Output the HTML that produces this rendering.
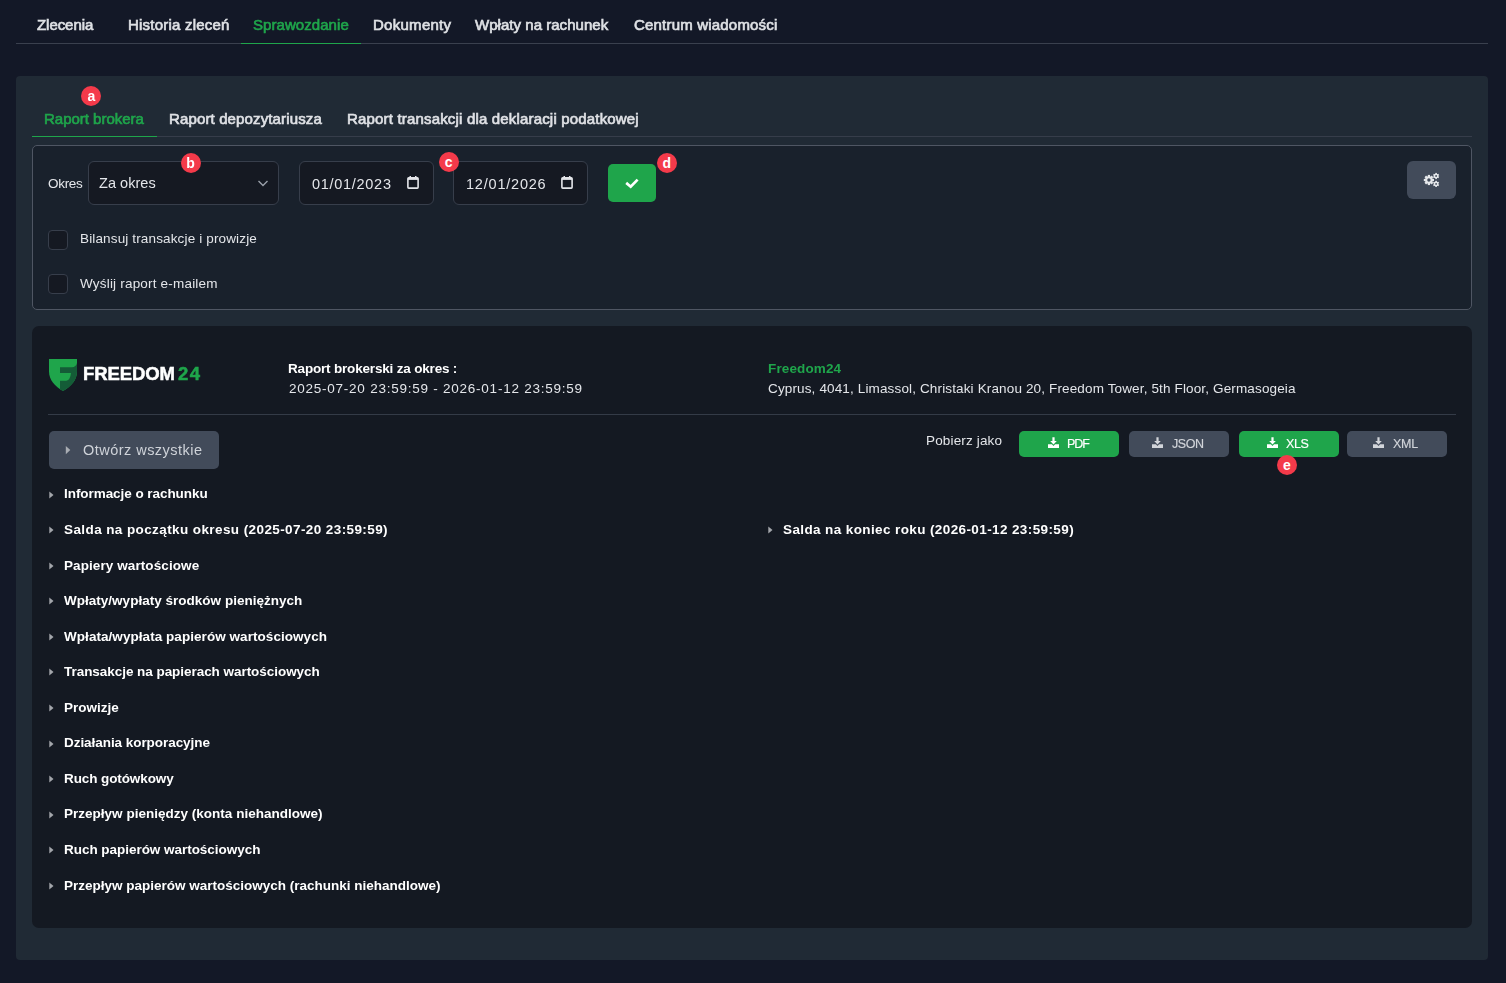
<!DOCTYPE html>
<html lang="pl"><head><meta charset="utf-8"><title>Sprawozdanie</title>
<style>
html,body{margin:0;padding:0;}
body{width:1506px;height:983px;background:#131827;position:relative;overflow:hidden;font-family:"Liberation Sans",sans-serif;}
.t{position:absolute;line-height:1;white-space:nowrap;will-change:transform;}
.r{position:absolute;}
.badge{position:absolute;width:20px;height:20px;border-radius:50%;background:#f43a4a;color:#fff;font:700 14px/20px "Liberation Sans",sans-serif;text-align:center;}
</style></head><body>
<div class="t" style="left:37.1px;top:17.40px;font-size:15px;font-weight:400;color:#dfe1e5;letter-spacing:-0.057px;-webkit-text-stroke:0.65px #dfe1e5;">Zlecenia</div>
<div class="t" style="left:127.7px;top:17.40px;font-size:15px;font-weight:400;color:#dfe1e5;letter-spacing:0.221px;-webkit-text-stroke:0.65px #dfe1e5;">Historia zleceń</div>
<div class="t" style="left:252.8px;top:17.40px;font-size:15px;font-weight:400;color:#1fa54b;letter-spacing:0.064px;-webkit-text-stroke:0.65px #1fa54b;">Sprawozdanie</div>
<div class="t" style="left:372.8px;top:17.40px;font-size:15px;font-weight:400;color:#dfe1e5;letter-spacing:0.275px;-webkit-text-stroke:0.65px #dfe1e5;">Dokumenty</div>
<div class="t" style="left:475.1px;top:17.40px;font-size:15px;font-weight:400;color:#dfe1e5;letter-spacing:0.035px;-webkit-text-stroke:0.65px #dfe1e5;">Wpłaty na rachunek</div>
<div class="t" style="left:633.6px;top:17.40px;font-size:15px;font-weight:400;color:#dfe1e5;letter-spacing:0.194px;-webkit-text-stroke:0.65px #dfe1e5;">Centrum wiadomości</div>
<div class="r" style="left:16px;top:43px;width:1472px;height:1px;background:#3a404e;border-radius:0px;"></div>
<div class="r" style="left:241px;top:43px;width:120px;height:1px;background:#1fa54b;border-radius:0px;"></div>
<div class="r" style="left:16px;top:76px;width:1472px;height:884px;background:#202a35;border-radius:4px;"></div>
<div class="t" style="left:43.7px;top:110.50px;font-size:15px;font-weight:400;color:#1fa54b;letter-spacing:-0.015px;-webkit-text-stroke:0.65px #1fa54b;">Raport brokera</div>
<div class="t" style="left:169.3px;top:110.50px;font-size:15px;font-weight:400;color:#dfe1e5;letter-spacing:0.135px;-webkit-text-stroke:0.65px #dfe1e5;">Raport depozytariusza</div>
<div class="t" style="left:346.8px;top:110.50px;font-size:15px;font-weight:400;color:#dfe1e5;letter-spacing:0.176px;-webkit-text-stroke:0.65px #dfe1e5;">Raport transakcji dla deklaracji podatkowej</div>
<div class="r" style="left:32px;top:136px;width:1440px;height:1px;background:#363d4a;border-radius:0px;"></div>
<div class="r" style="left:32px;top:136px;width:125px;height:1px;background:#1fa54b;border-radius:0px;"></div>
<div class="badge" style="left:81.3px;top:86.0px;">a</div>
<div class="r" style="left:32px;top:145px;width:1440px;height:165px;background:#19212c;border-radius:5px;border:1px solid #4f5663;box-sizing:border-box;"></div>
<div class="t" style="left:48.0px;top:176.97px;font-size:13.5px;font-weight:400;color:#e4e6ea;letter-spacing:-0.300px;">Okres</div>
<div class="r" style="left:88px;top:161px;width:191px;height:44px;background:#151922;border-radius:6px;border:1px solid #373e4b;box-sizing:border-box;"></div>
<div class="t" style="left:99.0px;top:176.13px;font-size:14.5px;font-weight:400;color:#e4e6ea;letter-spacing:0.040px;">Za okres</div>
<svg class="r" style="left:256.6px;top:179px" width="12" height="9" viewBox="0 0 12 9"><path d="M1.5 2 L6 6.5 L10.5 2" fill="none" stroke="#9aa0aa" stroke-width="1.4"/></svg>
<div class="badge" style="left:180.5px;top:152.9px;">b</div>
<div class="r" style="left:299px;top:161px;width:135px;height:44px;background:#151922;border-radius:6px;border:1px solid #373e4b;box-sizing:border-box;"></div>
<div class="t" style="left:311.5px;top:176.53px;font-size:14.5px;font-weight:400;color:#e4e6ea;letter-spacing:0.710px;">01/01/2023</div>
<svg class="r" style="left:407px;top:176px" width="12" height="13" viewBox="0 0 12 13"><rect x="0.9" y="1.9" width="10.2" height="10.2" rx="0.8" fill="none" stroke="#e4e6ea" stroke-width="1.6"/><rect x="0.9" y="1.9" width="10.2" height="2" fill="#e4e6ea"/><rect x="2.5" y="0" width="1.5" height="2" fill="#e4e6ea"/><rect x="8" y="0" width="1.5" height="2" fill="#e4e6ea"/></svg>
<div class="r" style="left:453px;top:161px;width:135px;height:44px;background:#151922;border-radius:6px;border:1px solid #373e4b;box-sizing:border-box;"></div>
<div class="t" style="left:465.5px;top:176.53px;font-size:14.5px;font-weight:400;color:#e4e6ea;letter-spacing:0.790px;">12/01/2026</div>
<svg class="r" style="left:561px;top:176px" width="12" height="13" viewBox="0 0 12 13"><rect x="0.9" y="1.9" width="10.2" height="10.2" rx="0.8" fill="none" stroke="#e4e6ea" stroke-width="1.6"/><rect x="0.9" y="1.9" width="10.2" height="2" fill="#e4e6ea"/><rect x="2.5" y="0" width="1.5" height="2" fill="#e4e6ea"/><rect x="8" y="0" width="1.5" height="2" fill="#e4e6ea"/></svg>
<div class="badge" style="left:438.7px;top:151.5px;">c</div>
<div class="r" style="left:608px;top:164px;width:48px;height:38px;background:#1fa54b;border-radius:5px;"></div>
<svg class="r" style="left:624px;top:177px" width="16" height="12" viewBox="0 0 16 12"><path d="M2.2 5.9 L6.7 9.7 L13.6 2.6" fill="none" stroke="#fff" stroke-width="2.7"/></svg>
<div class="badge" style="left:656.8px;top:152.8px;">d</div>
<div class="r" style="left:1407px;top:161px;width:49px;height:38px;background:#424b5a;border-radius:6px;"></div>
<svg class="r" style="left:1420px;top:170px" width="22" height="20" viewBox="0 0 22 20">
<g fill="#e6e8eb">
<circle cx="8.9" cy="10" r="3.8"/>
<g transform="translate(8.9 10)"><rect x="-1.1" y="-5.1" width="2.2" height="10.2"/><rect x="-1.1" y="-5.1" width="2.2" height="10.2" transform="rotate(45)"/><rect x="-1.1" y="-5.1" width="2.2" height="10.2" transform="rotate(90)"/><rect x="-1.1" y="-5.1" width="2.2" height="10.2" transform="rotate(135)"/></g>
<g transform="translate(16.1 6)"><circle r="2.3"/><rect x="-0.8" y="-3.1" width="1.6" height="6.2"/><rect x="-0.8" y="-3.1" width="1.6" height="6.2" transform="rotate(60)"/><rect x="-0.8" y="-3.1" width="1.6" height="6.2" transform="rotate(120)"/></g>
<g transform="translate(16.1 13.9)"><circle r="2.3"/><rect x="-0.8" y="-3.1" width="1.6" height="6.2"/><rect x="-0.8" y="-3.1" width="1.6" height="6.2" transform="rotate(60)"/><rect x="-0.8" y="-3.1" width="1.6" height="6.2" transform="rotate(120)"/></g>
</g>
<g fill="#424b5a"><circle cx="8.9" cy="10" r="1.7"/><circle cx="16.1" cy="6" r="0.9"/><circle cx="16.1" cy="13.9" r="0.9"/></g>
</svg>
<div class="r" style="left:48px;top:230px;width:20px;height:20px;background:#151922;border-radius:4px;border:1px solid #373e4b;box-sizing:border-box;"></div>
<div class="t" style="left:79.5px;top:231.77px;font-size:13.5px;font-weight:400;color:#e4e6ea;letter-spacing:0.145px;">Bilansuj transakcje i prowizje</div>
<div class="r" style="left:48px;top:274px;width:20px;height:20px;background:#151922;border-radius:4px;border:1px solid #373e4b;box-sizing:border-box;"></div>
<div class="t" style="left:79.5px;top:276.57px;font-size:13.5px;font-weight:400;color:#e4e6ea;letter-spacing:0.195px;">Wyślij raport e-mailem</div>
<div class="r" style="left:32px;top:326px;width:1440px;height:602px;background:#141922;border-radius:7px;"></div>
<svg class="r" style="left:48.9px;top:358.9px" width="28" height="32" viewBox="0 0 28 32">
<defs><clipPath id="sh"><path d="M0 0 H28 V12.5 C28 21 22 27.5 14 32 C6 27.5 0 21 0 12.5 Z"/></clipPath></defs>
<g clip-path="url(#sh)">
<rect width="28" height="32" fill="#1fa54b"/>
<path d="M11 8.2 H23 C25.5 8.2 27.5 6.5 28 4 V32 H11 Z" fill="#145c37"/>
<path d="M11 14.1 H22 C21.5 18.5 20 21.8 17 21.8 H11 Z" fill="#1fa54b"/>
</g></svg>
<div class="t" style="left:82.7px;top:364.94px;font-size:18.5px;font-weight:700;color:#ffffff;letter-spacing:-0.100px;-webkit-text-stroke:0.5px #fff;">FREEDOM</div>
<div class="t" style="left:178.3px;top:364.94px;font-size:18.5px;font-weight:700;color:#1fa54b;letter-spacing:1.500px;-webkit-text-stroke:0.5px #1fa54b;">24</div>
<div class="t" style="left:288.4px;top:361.97px;font-size:13.5px;font-weight:700;color:#ffffff;letter-spacing:-0.181px;">Raport brokerski za okres :</div>
<div class="t" style="left:289.1px;top:381.87px;font-size:13.5px;font-weight:400;color:#e4e6ea;letter-spacing:0.758px;">2025-07-20 23:59:59 - 2026-01-12 23:59:59</div>
<div class="t" style="left:768.1px;top:361.57px;font-size:13.5px;font-weight:700;color:#1fa54b;letter-spacing:0.137px;">Freedom24</div>
<div class="t" style="left:768.1px;top:381.97px;font-size:13.5px;font-weight:400;color:#e4e6ea;letter-spacing:0.142px;">Cyprus, 4041, Limassol, Christaki Kranou 20, Freedom Tower, 5th Floor, Germasogeia</div>
<div class="r" style="left:48px;top:414px;width:1408px;height:1px;background:#343b47;border-radius:0px;"></div>
<div class="r" style="left:49px;top:431px;width:170px;height:38px;background:#424b5a;border-radius:5px;"></div>
<svg class="r" style="left:65px;top:445px" width="6" height="10" viewBox="0 0 6 10"><path d="M0.8 1 L5.3 5.1 L0.8 9.2 Z" fill="#a9adb3"/></svg>
<div class="t" style="left:82.9px;top:443.23px;font-size:14.5px;font-weight:400;color:#cfd3d9;letter-spacing:0.467px;">Otwórz wszystkie</div>
<div class="t" style="left:925.6px;top:433.97px;font-size:13.5px;font-weight:400;color:#e4e6ea;letter-spacing:0.155px;">Pobierz jako</div>
<div class="r" style="left:1019px;top:431px;width:100px;height:26px;background:#1fa54b;border-radius:5px;"></div>
<svg class="r" style="left:1047.7px;top:437px" width="12" height="12" viewBox="0 0 12 12"><path d="M4.4 0.2 H6.6 V4 H8.8 L5.5 7.5 L2.2 4 H4.4 Z" fill="#ffffff"/><path d="M0 7.2 H3.9 L5.5 8.9 L7.1 7.2 H11 V11 H0 Z" fill="#ffffff"/></svg>
<div class="t" style="left:1067.3px;top:438.02px;font-size:12.5px;font-weight:400;color:#ffffff;letter-spacing:-1.050px;-webkit-text-stroke:0.15px #ffffff;">PDF</div>
<div class="r" style="left:1129px;top:431px;width:100px;height:26px;background:#424b5a;border-radius:5px;"></div>
<svg class="r" style="left:1152.4px;top:437px" width="12" height="12" viewBox="0 0 12 12"><path d="M4.4 0.2 H6.6 V4 H8.8 L5.5 7.5 L2.2 4 H4.4 Z" fill="#d2d5da"/><path d="M0 7.2 H3.9 L5.5 8.9 L7.1 7.2 H11 V11 H0 Z" fill="#d2d5da"/></svg>
<div class="t" style="left:1172.0px;top:438.02px;font-size:12.5px;font-weight:400;color:#d2d5da;letter-spacing:-0.467px;-webkit-text-stroke:0.15px #d2d5da;">JSON</div>
<div class="r" style="left:1239px;top:431px;width:100px;height:26px;background:#1fa54b;border-radius:5px;"></div>
<svg class="r" style="left:1266.8px;top:437px" width="12" height="12" viewBox="0 0 12 12"><path d="M4.4 0.2 H6.6 V4 H8.8 L5.5 7.5 L2.2 4 H4.4 Z" fill="#ffffff"/><path d="M0 7.2 H3.9 L5.5 8.9 L7.1 7.2 H11 V11 H0 Z" fill="#ffffff"/></svg>
<div class="t" style="left:1286.4px;top:438.02px;font-size:12.5px;font-weight:400;color:#ffffff;letter-spacing:-0.350px;-webkit-text-stroke:0.15px #ffffff;">XLS</div>
<div class="r" style="left:1347px;top:431px;width:100px;height:26px;background:#424b5a;border-radius:5px;"></div>
<svg class="r" style="left:1373.4px;top:437px" width="12" height="12" viewBox="0 0 12 12"><path d="M4.4 0.2 H6.6 V4 H8.8 L5.5 7.5 L2.2 4 H4.4 Z" fill="#d2d5da"/><path d="M0 7.2 H3.9 L5.5 8.9 L7.1 7.2 H11 V11 H0 Z" fill="#d2d5da"/></svg>
<div class="t" style="left:1393.0px;top:438.02px;font-size:12.5px;font-weight:400;color:#d2d5da;letter-spacing:-0.300px;-webkit-text-stroke:0.15px #d2d5da;">XML</div>
<div class="badge" style="left:1276.8px;top:455.0px;">e</div>
<svg class="r" style="left:48.5px;top:490.7px" width="5" height="8" viewBox="0 0 5 8"><path d="M0.3 0.4 L4.5 4 L0.3 7.6 Z" fill="#a3a6ab"/></svg>
<div class="t" style="left:63.8px;top:487.47px;font-size:13.5px;font-weight:700;color:#ffffff;letter-spacing:-0.055px;">Informacje o rachunku</div>
<svg class="r" style="left:48.5px;top:526.2px" width="5" height="8" viewBox="0 0 5 8"><path d="M0.3 0.4 L4.5 4 L0.3 7.6 Z" fill="#a3a6ab"/></svg>
<div class="t" style="left:63.8px;top:523.02px;font-size:13.5px;font-weight:700;color:#ffffff;letter-spacing:0.404px;">Salda na początku okresu (2025-07-20 23:59:59)</div>
<svg class="r" style="left:48.5px;top:561.8px" width="5" height="8" viewBox="0 0 5 8"><path d="M0.3 0.4 L4.5 4 L0.3 7.6 Z" fill="#a3a6ab"/></svg>
<div class="t" style="left:63.8px;top:558.57px;font-size:13.5px;font-weight:700;color:#ffffff;letter-spacing:0.089px;">Papiery wartościowe</div>
<svg class="r" style="left:48.5px;top:597.3px" width="5" height="8" viewBox="0 0 5 8"><path d="M0.3 0.4 L4.5 4 L0.3 7.6 Z" fill="#a3a6ab"/></svg>
<div class="t" style="left:63.8px;top:594.12px;font-size:13.5px;font-weight:700;color:#ffffff;letter-spacing:0.015px;">Wpłaty/wypłaty środków pieniężnych</div>
<svg class="r" style="left:48.5px;top:632.9px" width="5" height="8" viewBox="0 0 5 8"><path d="M0.3 0.4 L4.5 4 L0.3 7.6 Z" fill="#a3a6ab"/></svg>
<div class="t" style="left:63.8px;top:629.67px;font-size:13.5px;font-weight:700;color:#ffffff;letter-spacing:0.053px;">Wpłata/wypłata papierów wartościowych</div>
<svg class="r" style="left:48.5px;top:668.4px" width="5" height="8" viewBox="0 0 5 8"><path d="M0.3 0.4 L4.5 4 L0.3 7.6 Z" fill="#a3a6ab"/></svg>
<div class="t" style="left:63.8px;top:665.22px;font-size:13.5px;font-weight:700;color:#ffffff;letter-spacing:-0.044px;">Transakcje na papierach wartościowych</div>
<svg class="r" style="left:48.5px;top:704.0px" width="5" height="8" viewBox="0 0 5 8"><path d="M0.3 0.4 L4.5 4 L0.3 7.6 Z" fill="#a3a6ab"/></svg>
<div class="t" style="left:63.8px;top:700.77px;font-size:13.5px;font-weight:700;color:#ffffff;letter-spacing:0.000px;">Prowizje</div>
<svg class="r" style="left:48.5px;top:739.5px" width="5" height="8" viewBox="0 0 5 8"><path d="M0.3 0.4 L4.5 4 L0.3 7.6 Z" fill="#a3a6ab"/></svg>
<div class="t" style="left:63.8px;top:736.32px;font-size:13.5px;font-weight:700;color:#ffffff;letter-spacing:-0.052px;">Działania korporacyjne</div>
<svg class="r" style="left:48.5px;top:775.1px" width="5" height="8" viewBox="0 0 5 8"><path d="M0.3 0.4 L4.5 4 L0.3 7.6 Z" fill="#a3a6ab"/></svg>
<div class="t" style="left:63.8px;top:771.87px;font-size:13.5px;font-weight:700;color:#ffffff;letter-spacing:-0.100px;">Ruch gotówkowy</div>
<svg class="r" style="left:48.5px;top:810.6px" width="5" height="8" viewBox="0 0 5 8"><path d="M0.3 0.4 L4.5 4 L0.3 7.6 Z" fill="#a3a6ab"/></svg>
<div class="t" style="left:63.8px;top:807.42px;font-size:13.5px;font-weight:700;color:#ffffff;letter-spacing:0.014px;">Przepływ pieniędzy (konta niehandlowe)</div>
<svg class="r" style="left:48.5px;top:846.2px" width="5" height="8" viewBox="0 0 5 8"><path d="M0.3 0.4 L4.5 4 L0.3 7.6 Z" fill="#a3a6ab"/></svg>
<div class="t" style="left:63.8px;top:842.97px;font-size:13.5px;font-weight:700;color:#ffffff;letter-spacing:-0.035px;">Ruch papierów wartościowych</div>
<svg class="r" style="left:48.5px;top:881.7px" width="5" height="8" viewBox="0 0 5 8"><path d="M0.3 0.4 L4.5 4 L0.3 7.6 Z" fill="#a3a6ab"/></svg>
<div class="t" style="left:63.8px;top:878.52px;font-size:13.5px;font-weight:700;color:#ffffff;letter-spacing:-0.002px;">Przepływ papierów wartościowych (rachunki niehandlowe)</div>
<svg class="r" style="left:767.5px;top:526.2px" width="5" height="8" viewBox="0 0 5 8"><path d="M0.3 0.4 L4.5 4 L0.3 7.6 Z" fill="#a3a6ab"/></svg>
<div class="t" style="left:782.6px;top:523.02px;font-size:13.5px;font-weight:700;color:#ffffff;letter-spacing:0.390px;">Salda na koniec roku (2026-01-12 23:59:59)</div>
</body></html>
